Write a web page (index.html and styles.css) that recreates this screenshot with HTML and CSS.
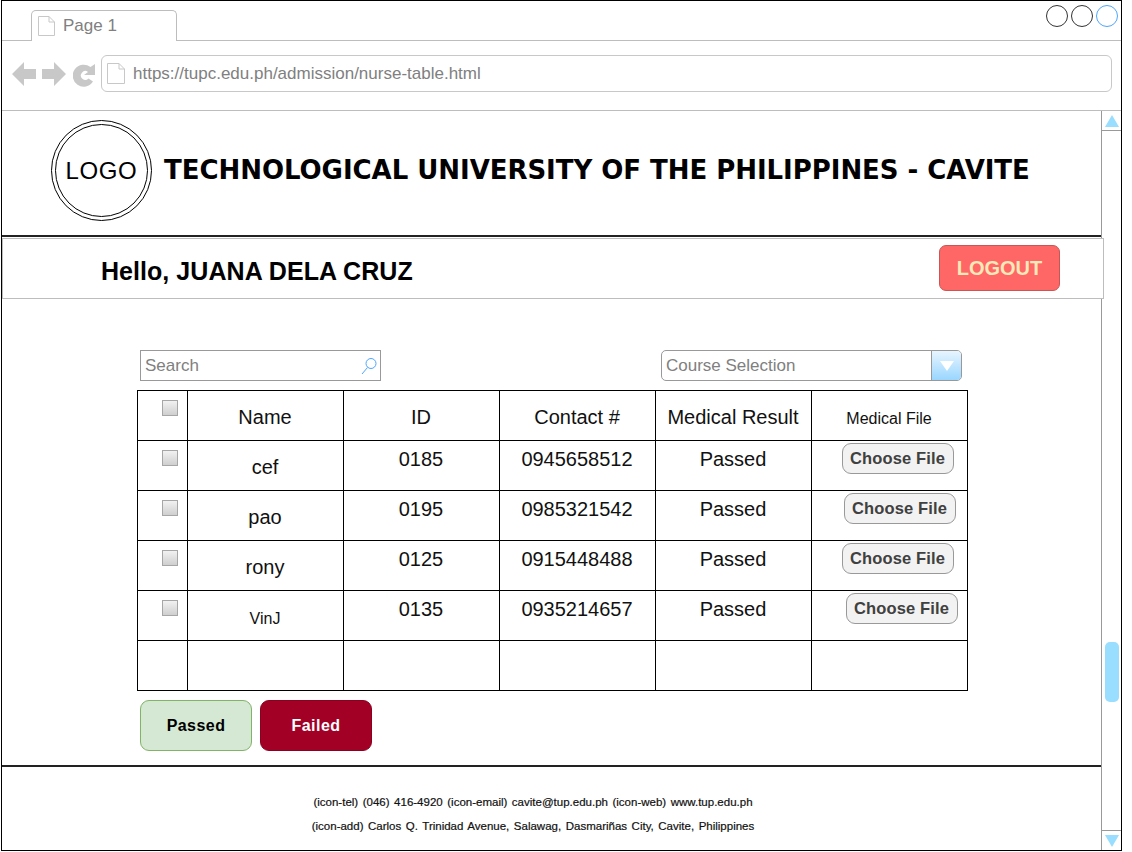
FILE: index.html
```html
<!DOCTYPE html>
<html lang="en">
<head>
<meta charset="utf-8">
<title>Nurse table</title>
<link rel="stylesheet" href="styles.css">
</head>
<body>
<div class="window">
  <div class="tabstrip">
    <div class="tab">
      <svg class="page-icon" width="17" height="20" viewBox="0 0 17 20"><path d="M.5.5H11L16.5 6V19.5H.5Z" fill="#fff" stroke="#c8c8c8"/><path d="M11 .5V6H16.5" fill="none" stroke="#c8c8c8"/></svg>
      <span>Page 1</span>
    </div>
    <div class="win-buttons">
      <span class="win-btn"></span><span class="win-btn"></span><span class="win-btn win-btn-blue"></span>
    </div>
  </div>
  <div class="toolbar">
    <div class="nav-icons">
      <svg width="24" height="24" viewBox="0 0 24 24"><path d="M0 12L12 0V7H24V17H12V24Z" fill="#c8c8c8"/></svg>
      <svg width="24" height="24" viewBox="0 0 24 24"><path d="M24 12L12 0V7H0V17H12V24Z" fill="#c8c8c8"/></svg>
      <svg width="23" height="23" viewBox="0 0 23 23"><path d="M20 17.5A11 11 0 1 1 17.5 3L22 0V11H11L15 8A4.4 4.4 0 1 0 15.5 14.5Z" fill="#c8c8c8"/></svg>
    </div>
    <div class="address">
      <svg class="page-icon" width="18" height="21" viewBox="0 0 18 21"><path d="M.5.5H12L17.5 6V20.5H.5Z" fill="#fff" stroke="#c8c8c8"/><path d="M12 .5V6H17.5" fill="none" stroke="#c8c8c8"/></svg>
      <span>https://tupc.edu.ph/admission/nurse-table.html</span>
    </div>
  </div>
  <div class="viewport">
    <div class="page">
      <header class="brand">
        <div class="logo"><div class="logo-inner">LOGO</div></div>
        <h1>TECHNOLOGICAL UNIVERSITY OF THE PHILIPPINES - CAVITE</h1>
      </header>
      <div class="userbar">
        <div class="hello">Hello, JUANA DELA CRUZ</div>
        <button class="logout">LOGOUT</button>
      </div>
      <main class="content">
        <div class="filters">
          <div class="search">
            <span>Search</span>
            <svg width="16" height="20" viewBox="0 0 16 20"><circle cx="10" cy="7.5" r="5" fill="none" stroke="#4da6ff"/><path d="M6.5 11.5L1 18" stroke="#4da6ff" fill="none"/></svg>
          </div>
          <div class="select">
            <span>Course Selection</span>
            <div class="select-arrow"><svg width="16" height="10" viewBox="0 0 16 10"><path d="M1 0H15L8 10Z" fill="#fff"/></svg></div>
          </div>
        </div>
        <table class="grid">
          <tr>
            <td class="c-check"><span class="check"></span></td>
            <td class="c-name">Name</td>
            <td class="c-id head">ID</td>
            <td class="c-id head">Contact #</td>
            <td class="c-id head">Medical Result</td>
            <td class="c-file small">Medical File</td>
          </tr>
          <tr>
            <td class="c-check"><span class="check"></span></td>
            <td class="c-name">cef</td>
            <td class="c-id">0185</td>
            <td class="c-id">0945658512</td>
            <td class="c-id">Passed</td>
            <td class="c-btn"><button class="choose o30">Choose File</button></td>
          </tr>
          <tr>
            <td class="c-check"><span class="check"></span></td>
            <td class="c-name">pao</td>
            <td class="c-id">0195</td>
            <td class="c-id">0985321542</td>
            <td class="c-id">Passed</td>
            <td class="c-btn"><button class="choose o32">Choose File</button></td>
          </tr>
          <tr>
            <td class="c-check"><span class="check"></span></td>
            <td class="c-name">rony</td>
            <td class="c-id">0125</td>
            <td class="c-id">0915448488</td>
            <td class="c-id">Passed</td>
            <td class="c-btn"><button class="choose o30">Choose File</button></td>
          </tr>
          <tr>
            <td class="c-check"><span class="check"></span></td>
            <td class="c-name small">VinJ</td>
            <td class="c-id">0135</td>
            <td class="c-id">0935214657</td>
            <td class="c-id">Passed</td>
            <td class="c-btn"><button class="choose o34">Choose File</button></td>
          </tr>
          <tr>
            <td class="c-check"></td><td></td><td></td><td></td><td></td><td></td>
          </tr>
        </table>
        <div class="actions">
          <button class="action passed">Passed</button>
          <button class="action failed">Failed</button>
        </div>
      </main>
      <footer class="foot">
        <p>(icon-tel) (046) 416-4920 (icon-email) cavite@tup.edu.ph (icon-web) www.tup.edu.ph</p>
        <p>(icon-add) Carlos Q. Trinidad Avenue, Salawag, Dasmariñas City, Cavite, Philippines</p>
      </footer>
    </div>
    <aside class="scrollbar">
      <div class="sb-btn"><svg width="14" height="12" viewBox="0 0 14 12"><path d="M7 0L14 12H0Z" fill="#99ddff"/></svg></div>
      <div class="sb-thumb"></div>
      <div class="sb-btn sb-btn-down"><svg width="14" height="12" viewBox="0 0 14 12"><path d="M0 0H14L7 12Z" fill="#99ddff"/></svg></div>
    </aside>
  </div>
</div>
</body>
</html>
```
FILE: styles.css
```css
* { box-sizing: border-box; }
html, body { margin: 0; padding: 0; background: #fff; }
body { font-family: "Liberation Sans", Arial, sans-serif; color: #000; }
.window {
  width: 1121px; height: 851px; margin-left: 1px;
  border: 1px solid #000; border-bottom: 1px solid #000;
  display: flex; flex-direction: column; overflow: hidden;
}
.tabstrip {
  height: 40px; flex: none; border-bottom: 1px solid #bdbdbd;
  display: flex; justify-content: space-between; padding-left: 29px;
}
.tab {
  width: 146px; height: 31px; margin-top: 9px;
  border: 1px solid #bdbdbd; border-bottom: 0; border-radius: 5px 5px 0 0;
  background: #fff; display: flex; align-items: center; gap: 8px; padding: 0 0 0 6px;
  font-size: 17px; color: #808080;
}
.win-buttons { display: flex; gap: 3px; padding: 4px 3px 0 0; }
.win-btn { width: 22px; height: 22px; border: 1px solid #333; border-radius: 50%; }
.win-btn-blue { border-color: #4da6ff; }
.toolbar {
  height: 70px; flex: none; border-bottom: 1px solid #bdbdbd;
  display: flex; padding: 14px 9px 0 10px; gap: 5px;
}
.nav-icons { display: flex; gap: 6px; padding-top: 7px; width: 84px; height: 30px; flex: none; }
.nav-icons svg:last-child { margin: 2px 0 0 1px; }
.address {
  flex: 1; height: 37px; border: 1px solid #c8c8c8; border-radius: 6px;
  display: flex; align-items: center; gap: 8px; padding-left: 5px;
  font-size: 17px; color: #808080;
}
.viewport { flex: 1; display: flex; min-height: 0; }
.page { width: 1099px; flex: none; display: flex; flex-direction: column; }
.brand {
  height: 126px; flex: none; border-bottom: 2px solid #222;
  display: flex; padding: 9px 0 0 49px; gap: 12px;
}
.logo {
  width: 101px; height: 101px; border: 1px solid #000; border-radius: 50%; padding: 3px; flex: none;
}
.logo-inner {
  width: 93px; height: 93px; border: 1px solid #000; border-radius: 50%;
  display: flex; align-items: center; justify-content: center; font-size: 24px; letter-spacing: .6px;
}
.brand h1 {
  margin: 34px 0 0; font-family: "DejaVu Sans", sans-serif; letter-spacing: -.04px;
  font-size: 26px; line-height: 32px; font-weight: bold; white-space: nowrap;
}
.userbar {
  width: 1102px; height: 61px; flex: none; margin: 1px 0 0 0; position: relative; z-index: 1;
  border: 1px solid #bdbdbd; background: #fff;
  display: flex; justify-content: space-between; padding: 6px 43px 0 98px;
}
.hello { font-size: 25px; font-weight: bold; line-height: 52px; letter-spacing: .05px; }
.logout {
  width: 121px; height: 46px; background: #ff6666; border: 1px solid #c95555; border-radius: 7px;
  color: #ffe9b8; font: bold 20px "Liberation Sans", Arial, sans-serif; padding: 1px 0 0;
}
.content { flex: 1; padding: 51px 0 0 135px; }
.filters { width: 822px; margin-left: 3px; display: flex; justify-content: space-between; height: 40px; }
.search {
  width: 241px; height: 31px; border: 1px solid #999;
  display: flex; justify-content: space-between; align-items: center; padding: 0 3px 0 4px;
  font-size: 17px; color: #808080;
}
.select {
  width: 301px; height: 31px; border: 1px solid #999; border-radius: 5px; overflow: hidden;
  display: flex; justify-content: space-between; align-items: center; padding-left: 4px;
  font-size: 17px; color: #808080;
}
.select-arrow {
  width: 30px; height: 29px; border-left: 1px solid #999;
  background: linear-gradient(#e8f5ff, #99d6ff);
  display: flex; align-items: center; justify-content: center;
}
.grid { border-collapse: collapse; table-layout: fixed; width: 831px; }
.grid td { border: 1px solid #000; height: 50px; padding: 0; font-size: 20px; text-align: center; color: #111; }
.grid td:nth-child(1) { width: 50px; }
.grid td:nth-child(n+2) { width: 156px; }
.grid td.small { font-size: 16px; }
.c-check { vertical-align: top; }
.check {
  display: block; width: 16px; height: 16px; margin: 9px 0 0 24px;
  border: 1px solid #a6a6a6; background: linear-gradient(#f2f2f2, #cfcfcf);
}
.c-name { vertical-align: middle; }
.grid td.c-name { padding: 4px 1px 0 0; }
.grid td.c-name.small { padding-top: 6px; }
.grid td.c-id { vertical-align: top; padding: 7px 1px 0 0; }
.grid td.c-id.head { vertical-align: middle; padding: 4px 1px 0 0; }
.grid td.c-file { vertical-align: middle; padding: 7px 1px 0 0; }
.c-btn { vertical-align: top; text-align: left !important; }
.choose {
  display: block; width: 112px; height: 31px; margin-top: 2px;
  background: #f2f2f2; border: 1px solid #999; border-radius: 9px; padding: 0 1px 0 0;
  color: #404040; font: bold 16.5px "Liberation Sans", Arial, sans-serif; letter-spacing: .15px;
}
.o30 { margin-left: 30px; }
.o32 { margin-left: 32px; }
.o34 { margin-left: 34px; }
.actions { display: flex; gap: 8px; margin: 9px 0 0 3px; }
.action {
  width: 112px; height: 51px; border-radius: 9px; padding: 0;
  font: bold 16px "Liberation Sans", Arial, sans-serif; letter-spacing: .45px;
}
.passed { background: #d5e8d4; border: 1px solid #82b366; color: #000; }
.failed { background: #a20025; border: 1px solid #8a0020; color: #fff; }
.foot { height: 85px; flex: none; border-top: 2px solid #222; padding: 29px 37px 0 0; text-align: center; }
.foot p { margin: 0 0 12px; font: 11.5px/12px "Liberation Sans", sans-serif; word-spacing: 1.35px; color: #111; -webkit-text-stroke: .2px #111; white-space: nowrap; }
.scrollbar {
  width: 20px; flex: none; border-left: 1px solid #999;
  display: flex; flex-direction: column; align-items: center;
}
.sb-btn { width: 100%; height: 20px; border-bottom: 1px solid #999; display: flex; align-items: center; justify-content: center; flex: none; }
.sb-btn-down { border-bottom: 0; border-top: 1px solid #999; margin-top: auto; }
.sb-thumb { width: 14px; height: 60px; margin-top: 511px; background: #99ddff; border-radius: 5px; flex: none; }
```
